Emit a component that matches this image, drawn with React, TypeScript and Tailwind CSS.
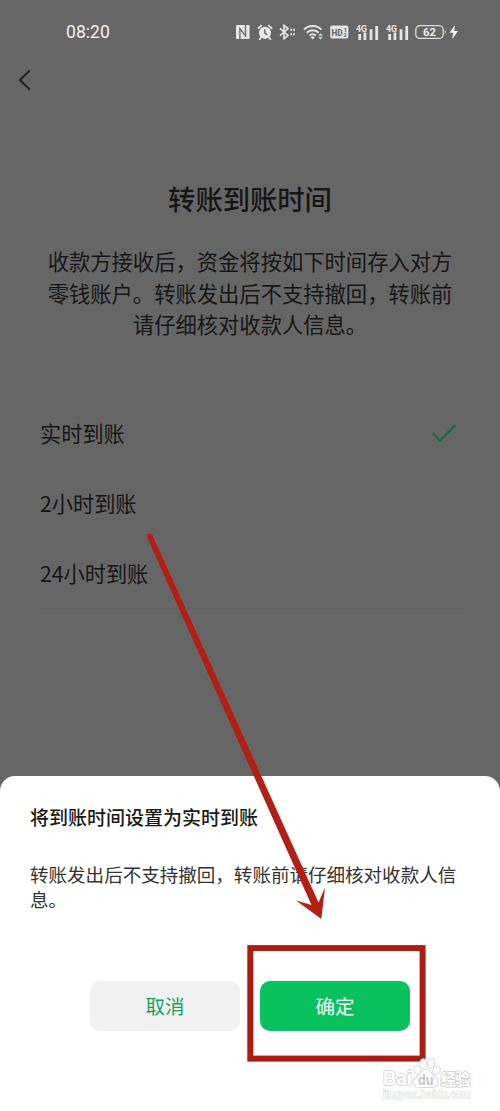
const cjk = "font-['Noto_Sans_CJK_SC',sans-serif]";

function NfcIcon() {
  return (
    <svg width="14" height="16" viewBox="0 0 14 16">
      <rect x="0" y="1" width="13.6" height="14" rx="1" fill="#e6e6e6" />
      <path d="M3.900 15V4.600l5.600 7.200V1" fill="none" stroke="#666" strokeWidth="1.300" />
    </svg>
  );
}

function AlarmIcon() {
  return (
    <svg width="16" height="16" viewBox="0 0 16 16">
      <circle cx="8" cy="8.8" r="6.1" fill="#e9e9e9" />
      <path d="M1.4 4.2 4.2 1.6M14.6 4.2l-2.8-2.6M3.8 13.6l-1.2 1.6M12.2 13.6l1.2 1.6" stroke="#e9e9e9" strokeWidth="1.8" strokeLinecap="round" />
      <path d="M7.8 5.2v4l2.6 1.6" fill="none" stroke="#666" strokeWidth="1.4" />
    </svg>
  );
}

function BluetoothIcon() {
  return (
    <svg width="17" height="16" viewBox="0 0 17 16">
      <path d="M1 4.4l8 7-4 3.3V1.3l4 3.3-8 7" fill="none" stroke="#e4e4e4" strokeWidth="1.6" />
      <path d="M11.3 5.7h1.800M14 5.700h1.800M11.3 10.3h1.800M14 10.300h1.800" stroke="#e4e4e4" strokeWidth="1.9" />
    </svg>
  );
}

function WifiIcon() {
  return (
    <svg width="21" height="16" viewBox="0 0 21 16">
      <path d="M1 5.6a12.3 12.3 0 0 1 17.4 0M3.8 8.7a8.3 8.3 0 0 1 11.8 0M6.5 11.6a4.4 4.4 0 0 1 6.2 0" fill="none" stroke="#e9e9e9" strokeWidth="2" />
      <path d="M7.6 13.2a2.9 2.9 0 0 1 4 0L9.6 15.6z" fill="#e9e9e9" />
      <path d="M17.6 9.2l2.3 2.6h-4.6zM17.6 15.6l2.3-2.6h-4.6z" fill="#d5d5d5" />
    </svg>
  );
}

function HdIcon() {
  return (
    <svg width="19" height="16" viewBox="0 0 19 16">
      <rect x=".2" y="1.6" width="18.2" height="13" rx="2" fill="#e4e4e4" />
      <text x="1.600" y="11.700" fontFamily="Roboto" fontWeight="700" fontSize="9.500" textLength="11" lengthAdjust="spacingAndGlyphs" fill="#606060">HD</text>
      <text x="13.800" y="7.600" fontFamily="Roboto" fontWeight="700" fontSize="5.500" fill="#606060">1</text>
      <text x="13.600" y="13" fontFamily="Roboto" fontWeight="700" fontSize="5.500" fill="#606060">2</text>
    </svg>
  );
}

function SignalIcon() {
  return (
    <svg width="24" height="17" viewBox="0 0 24 17">
      <text x="0" y="7.6" fontFamily="Roboto" fontWeight="700" fontSize="8.8" textLength="11" lengthAdjust="spacingAndGlyphs" fill="#e9e9e9">4G</text>
      <path d="M3.7 10v6M8.9 8.6V16M15 5.3V16M20.7 2v14" stroke="#e4e4e4" strokeWidth="2.8" />
    </svg>
  );
}

function BatteryIcon() {
  return (
    <svg width="45" height="16" viewBox="0 0 45 16">
      <rect x=".8" y="1.7" width="27.4" height="12.7" rx="4" fill="none" stroke="#dedede" strokeWidth="1.3" />
      <path d="M29.8 5.6c1.3 1.3 1.3 3.6 0 4.9z" fill="#dedede" />
      <text x="14.4" y="12" textAnchor="middle" fontFamily="Roboto" fontWeight="700" fontSize="11" textLength="12.8" lengthAdjust="spacingAndGlyphs" fill="#f0f0f0">62</text>
      <path d="M39.7 1.2 34.6 8.8h3.6l-1.1 6.4 6-8.3h-3.7z" fill="#f0f0f0" />
    </svg>
  );
}

function StatusBar() {
  return (
    <div className="flex h-16 items-center">
      <div className="ml-[66px] w-[170px] pt-0.5 font-['Roboto',sans-serif] text-[17.6px] leading-none text-[#f2f2f2]">08:20</div>
      <div className="flex items-center">
        <div className="w-[21px]"><NfcIcon /></div>
        <div className="w-[22px]"><AlarmIcon /></div>
        <div className="w-6"><BluetoothIcon /></div>
        <div className="w-[27px]"><WifiIcon /></div>
        <div className="w-[26px]"><HdIcon /></div>
        <div className="w-[30px]"><SignalIcon /></div>
        <div className="w-[29px]"><SignalIcon /></div>
        <BatteryIcon />
      </div>
    </div>
  );
}

const options = ["实时到账", "2小时到账", "24小时到账"];

function Watermark() {
  return (
    <svg width="96" height="48" viewBox="0 0 96 48" className="absolute bottom-1.5 right-[25px]">
      <g fill="#fff" stroke="#cfcfcf" strokeWidth="1.6" paintOrder="stroke" strokeLinejoin="round">
        <text x="4" y="28" fontFamily="Liberation Sans" fontWeight="700" fontSize="20" textLength="29" lengthAdjust="spacingAndGlyphs">Bai</text>
        <path d="M47 13c5 0 6 5 9.500 8 4 3.500 2.500 9-3 9h-13c-6 0-8-6-3.500-9.300C41 17.500 42 13 47 13z" />
        <ellipse cx="38.500" cy="13" rx="3.200" ry="4" transform="rotate(-18 38.500 13)" />
        <ellipse cx="44.300" cy="6.500" rx="3.200" ry="4.400" />
        <ellipse cx="52" cy="6.500" rx="3.200" ry="4.400" transform="rotate(8 52 6.500)" />
        <ellipse cx="57.500" cy="13.500" rx="3.200" ry="4" transform="rotate(20 57.500 13.500)" />
        <text x="61.500" y="27.500" fontFamily="Noto Sans CJK SC" fontWeight="700" fontSize="15.500" textLength="30">经验</text>
      </g>
      <text x="39" y="28" fontFamily="Liberation Sans" fontWeight="700" fontSize="14" textLength="15.500" lengthAdjust="spacingAndGlyphs" fill="#c4c4c4">du</text>
      <text x="4" y="40.500" fontFamily="Liberation Sans" fontSize="10.500" textLength="88" fill="#fff" stroke="#e1e1e1" strokeWidth="1.300" paintOrder="stroke">jingyan.baidu.com</text>
    </svg>
  );
}

function ConfirmSheet() {
  return (
    <section className="flex h-[335px] flex-col rounded-t-[15px] bg-white px-[30px] pt-[27px] text-[#191919]">
      <h2 className="h-[28px] whitespace-nowrap text-[19px] font-medium leading-[28px]">将到账时间设置为实时到账</h2>
      <p className="mt-[30px] whitespace-nowrap text-[18.55px] leading-[25px] text-[#333]">
        转账发出后不支持撤回，转账前请仔细核对收款人信
        <br />
        息。
      </p>
      <div className="mt-[70px] flex gap-[20px] pl-[60px] text-[19.5px]">
        <button className="h-[50px] w-[150px] rounded-[10px] bg-[#f1f1f1] text-[#18a45c]">取消</button>
        <button className="h-[50px] w-[150px] rounded-[10px] bg-[#0ac160] text-[#f0fff6]">确定</button>
      </div>
    </section>
  );
}

function Annotation() {
  return (
    <svg width="500" height="1111" viewBox="0 0 500 1111" className="pointer-events-none absolute left-0 top-0">
      <path d="M147.200 537.500a2.800 2.800 0 0 1 5.200-2.300L318.500 902.500 325 887.500 321.300 919 296 900.500l15.500 4.500z" fill="#b31f14" />
      <rect x="250.300" y="948.100" width="172.300" height="110.500" fill="none" stroke="#ab1c14" strokeWidth="6" />
    </svg>
  );
}

export default function App() {
  return (
    <div className={`relative flex h-[1111px] w-[500px] flex-col overflow-hidden bg-[#666] text-[#161616] ${cjk}`}>
      <StatusBar />
      <header className="flex h-8 items-center pl-[18px]">
        <svg width="14" height="22" viewBox="0 0 14 22" fill="none" stroke="#1d1d1d" strokeWidth="1.8">
          <path d="M11.800 1.300 2 11l9.800 9.700" />
        </svg>
      </header>
      <main className="flex-1 bg-[#666]">
        <h1 className="mt-[82px] text-center text-[27.300px] font-medium leading-10">转账到账时间</h1>
        <p className="mt-[27px] whitespace-nowrap text-center text-[21.300px] leading-[31.500px]">
          收款方接收后，资金将按如下时间存入对方
          <br />
          零钱账户。转账发出后不支持撤回，转账前
          <br />
          请仔细核对收款人信息。
        </p>
        <ul className="mt-[59px] pl-[40px] pr-[37px]">
          {options.map((label, i) => (
            <li key={label} className="flex h-[70px] items-center justify-between border-b border-[#636363] text-[21.200px]">
              <span>{label}</span>
              {i === 0 && (
                <svg width="24" height="18" viewBox="0 0 24 18" fill="none" stroke="#176b40" strokeWidth="2" className="mr-[7px]">
                  <path d="M.6 9 8 16.400 23.400 1" />
                </svg>
              )}
            </li>
          ))}
        </ul>
      </main>
      <ConfirmSheet />
      <Annotation />
      <Watermark />
    </div>
  );
}
